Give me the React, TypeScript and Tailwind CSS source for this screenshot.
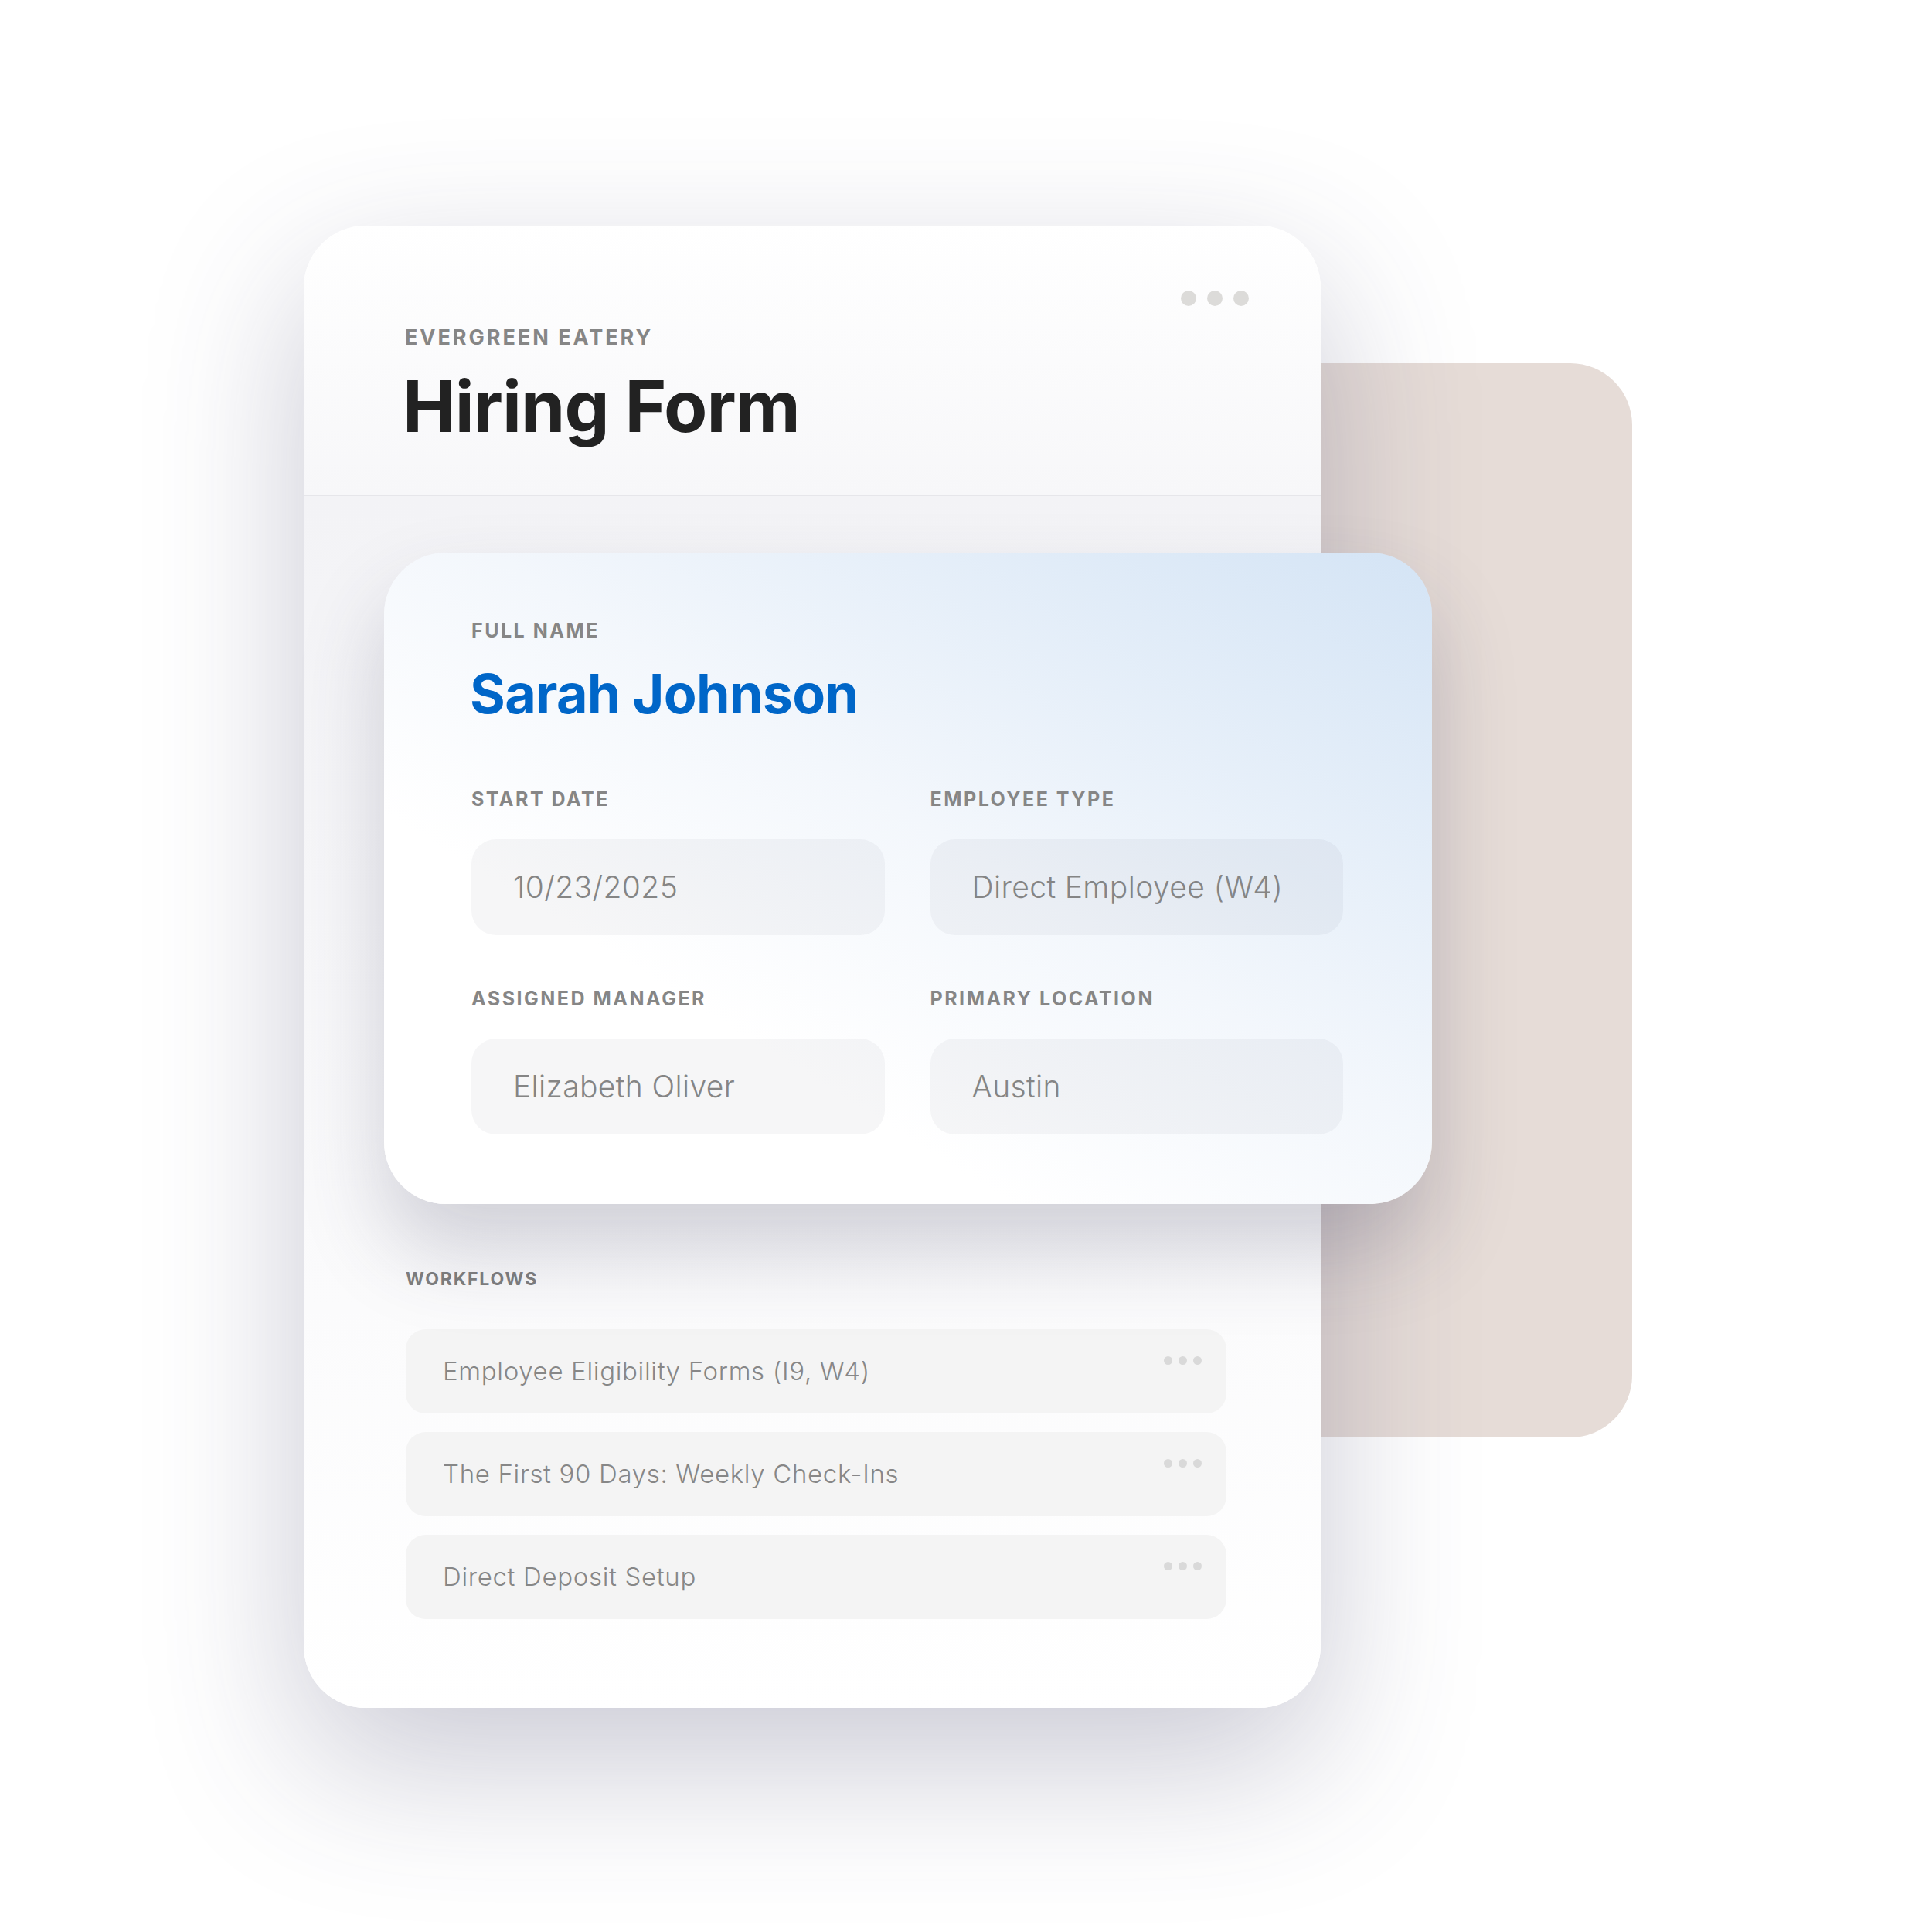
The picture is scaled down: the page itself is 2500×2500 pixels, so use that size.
import React from 'react';

const labelCls =
  'text-[25px] leading-[32px] font-bold tracking-[0.1em] uppercase text-[#868686]';

function Dots({ size, gap, color }: { size: string; gap: string; color: string }) {
  return (
    <div className={`flex ${gap}`}>
      <span className={`${size} ${color} rounded-full`} />
      <span className={`${size} ${color} rounded-full`} />
      <span className={`${size} ${color} rounded-full`} />
    </div>
  );
}

function Field({ label, value }: { label: string; value: string }) {
  return (
    <div className="flex flex-col">
      <div className={labelCls}>{label}</div>
      <div className="mt-[36px] h-[124px] rounded-[32px] bg-[rgba(40,50,70,0.045)] flex items-center px-[54px] text-[39px] font-light tracking-[0.01em] text-[#858585]">
        {value}
      </div>
    </div>
  );
}

function WorkflowRow({ title }: { title: string }) {
  return (
    <div className="h-[109px] rounded-[26px] bg-[#f4f4f4] flex justify-between pl-[48px] pr-[32px]">
      <span className="self-center text-[33px] font-light tracking-[0.02em] text-[#878787]">{title}</span>
      <div className="mt-[35px]">
        <Dots size="w-[11px] h-[11px]" gap="gap-[8px]" color="bg-[#d9d9d9]" />
      </div>
    </div>
  );
}

export default function App() {
  const workflows = [
    'Employee Eligibility Forms (I9, W4)',
    'The First 90 Days: Weekly Check-Ins',
    'Direct Deposit Setup',
  ];

  return (
    <div className="relative w-[2500px] h-[2500px] overflow-hidden bg-white font-[Inter,'Noto_Sans',sans-serif]">
      {/* tan card sitting behind the form */}
      <div className="absolute left-[1300px] top-[470px] w-[812px] h-[1390px] rounded-[80px] bg-[#e6dcd7]" />

      <div className="relative z-10 pt-[292px] pl-[393px]">
        <div className="w-[1316px] rounded-[80px] bg-white shadow-[0_70px_200px_rgba(60,60,100,0.28)]">
          {/* header */}
          <div className="rounded-t-[80px] bg-linear-to-b from-white to-[#f7f7f9] pt-[84px] pl-[128px] pr-[93px] pb-[68px] border-b-2 border-[#e6e6ea]">
            <div className="flex justify-end">
              <Dots size="w-[20px] h-[20px]" gap="gap-[14px]" color="bg-[#dcdbd9]" />
            </div>
            <div className="mt-[25px] ml-[3px] text-[27px] leading-[32px] font-bold tracking-[0.11em] text-[#868686]">
              EVERGREEN EATERY
            </div>
            <h1 className="mt-[27px] text-[92px] leading-none font-bold text-[#222] tracking-[-0.01em]">
              Hiring Form
            </h1>
          </div>

          {/* body */}
          <div className="rounded-b-[80px] bg-linear-to-b from-[#f3f3f6] to-white pt-[73px] pl-[132px] pb-[115px]">
            <div className="relative z-10 -ml-[28px] w-[1356px] rounded-[80px] bg-linear-to-bl from-[#d4e4f5] via-[#f3f7fc] via-45% to-white to-70% shadow-[0_60px_110px_rgba(60,60,90,0.22)] pt-[85px] pl-[113px] pr-[115px] pb-[90px]">
              <div className={labelCls}>FULL NAME</div>
              <div className="mt-[31px] -ml-[2px] text-[70px] leading-none font-bold text-[#0066c8] tracking-[-0.01em]">
                Sarah Johnson
              </div>
              <div className="mt-[85px] grid grid-cols-2 gap-x-[59px] gap-y-[66px]">
                <Field label="START DATE" value="10/23/2025" />
                <Field label="EMPLOYEE TYPE" value="Direct Employee (W4)" />
                <Field label="ASSIGNED MANAGER" value="Elizabeth Oliver" />
                <Field label="PRIMARY LOCATION" value="Austin" />
              </div>
            </div>

            <div className="mt-[83px] text-[23px] leading-[28px] font-bold tracking-[0.08em] text-[#7f7f7f]">
              WORKFLOWS
            </div>
            <div className="mt-[51px] w-[1062px] flex flex-col gap-[24px]">
              {workflows.map((w) => (
                <WorkflowRow key={w} title={w} />
              ))}
            </div>
          </div>
        </div>
      </div>
    </div>
  );
}
